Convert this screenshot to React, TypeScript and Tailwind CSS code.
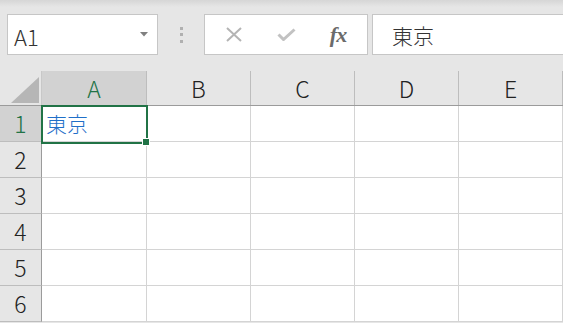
import React from "react";

const cols = ["A", "B", "C", "D", "E"];
const rows = [1, 2, 3, 4, 5, 6];

export default function App() {
  return (
    <div className="w-[563px] h-[323px] overflow-hidden bg-[#e6e6e6] font-['Noto_Sans_CJK_JP',sans-serif] font-light text-[#222]">
      {/* formula bar */}
      <div className="h-[71px] flex items-start pt-[14px] pl-[7px] bg-[linear-gradient(#d6d6d6,#e6e6e6_7px)]">
        <div className="w-[151px] h-[41px] border border-[#c6c6c6] bg-white flex items-center justify-between pl-[6px] pr-[9px]">
          <span className="text-[22px] leading-none text-[#333] mt-[2px]">A1</span>
          <svg width="8" height="5" viewBox="0 0 8 5">
            <path d="M0 0h8L4 4.5z" fill="#808080" />
          </svg>
        </div>
        <div className="w-[46px] h-[41px] flex flex-col items-center justify-center gap-[3.5px]">
          <span className="w-[3px] h-[3px] bg-[#b0b0b0]" />
          <span className="w-[3px] h-[3px] bg-[#b0b0b0]" />
          <span className="w-[3px] h-[3px] bg-[#b0b0b0]" />
        </div>
        <div className="w-[164px] h-[41px] border border-[#c6c6c6] bg-white flex items-center">
          <div className="w-[56px] flex justify-center pl-[1px]">
            <svg width="16" height="15" viewBox="0 0 16 15">
              <path d="M1 1l14 13M15 1L1 14" stroke="#b4b4b4" strokeWidth="2" fill="none" />
            </svg>
          </div>
          <div className="w-[50px] flex justify-center">
            <svg width="19" height="13" viewBox="0 0 19 13">
              <path d="M1.5 6.5l5 5L17.5 1.5" stroke="#c2c2c2" strokeWidth="3" fill="none" />
            </svg>
          </div>
          <div className="flex-1 flex justify-center pr-[2px]">
            <span className="font-['Liberation_Serif',serif] italic font-bold text-[22px] leading-none text-[#6b6b6b] tracking-[-1px]">
              fx
            </span>
          </div>
        </div>
        <div className="flex-1 ml-[4px] h-[41px] border border-r-0 border-[#c6c6c6] bg-white flex items-center pl-[19px]">
          <span className="text-[21px] leading-none text-[#333] mt-[1px]">東京</span>
        </div>
      </div>

      {/* grid */}
      <div className="relative">
        <div className="flex h-[35px] border-b border-[#9b9b9b]">
          <div className="w-[42px] shrink-0 border-r border-[#c8c8c8] flex items-end justify-end pr-[2px] pb-[2px]">
            <svg width="28" height="26" viewBox="0 0 28 26">
              <path d="M28 0V26H0z" fill="#b6b6b6" />
            </svg>
          </div>
          {cols.map((c, i) => (
            <div
              key={c}
              className={
                i === 0
                  ? "w-[105px] shrink-0 bg-[#d2d2d2] border-r border-[#bdbdbd] flex items-center justify-center text-[23px] text-[#217346]"
                  : "w-[104px] shrink-0 border-r border-[#bdbdbd] flex items-center justify-center text-[23px] text-[#222]"
              }
            >
              {c}
            </div>
          ))}
        </div>
        {rows.map((r) => (
          <div key={r} className="flex h-[36px]">
            <div
              className={
                r === 1
                  ? "w-[42px] shrink-0 bg-[#d2d2d2] border-r border-b border-r-[#9b9b9b] border-b-[#bdbdbd] flex items-center justify-center text-[23px] text-[#217346]"
                  : "w-[42px] shrink-0 border-r border-b border-r-[#9b9b9b] border-b-[#bdbdbd] flex items-center justify-center text-[23px] text-[#222]"
              }
            >
              {r}
            </div>
            {cols.map((c, i) => (
              <div
                key={c}
                className={
                  i === 0
                    ? "w-[105px] shrink-0 bg-white border-r border-b border-[#d4d4d4] flex items-center pl-[4px]"
                    : "w-[104px] shrink-0 bg-white border-r border-b border-[#d4d4d4] flex items-center pl-[4px]"
                }
              >
                {r === 1 && c === "A" ? (
                  <span className="text-[21px] leading-none text-[#1f6fc8]">東京</span>
                ) : null}
              </div>
            ))}
          </div>
        ))}

        {/* selection */}
        <div className="absolute left-[41px] top-[34px] w-[107px] h-[39px] border-2 border-[#217346]" />
        <div className="absolute left-[142px] top-[67px] w-[8px] h-[8px] bg-[#217346] border border-white" />
      </div>
    </div>
  );
}
